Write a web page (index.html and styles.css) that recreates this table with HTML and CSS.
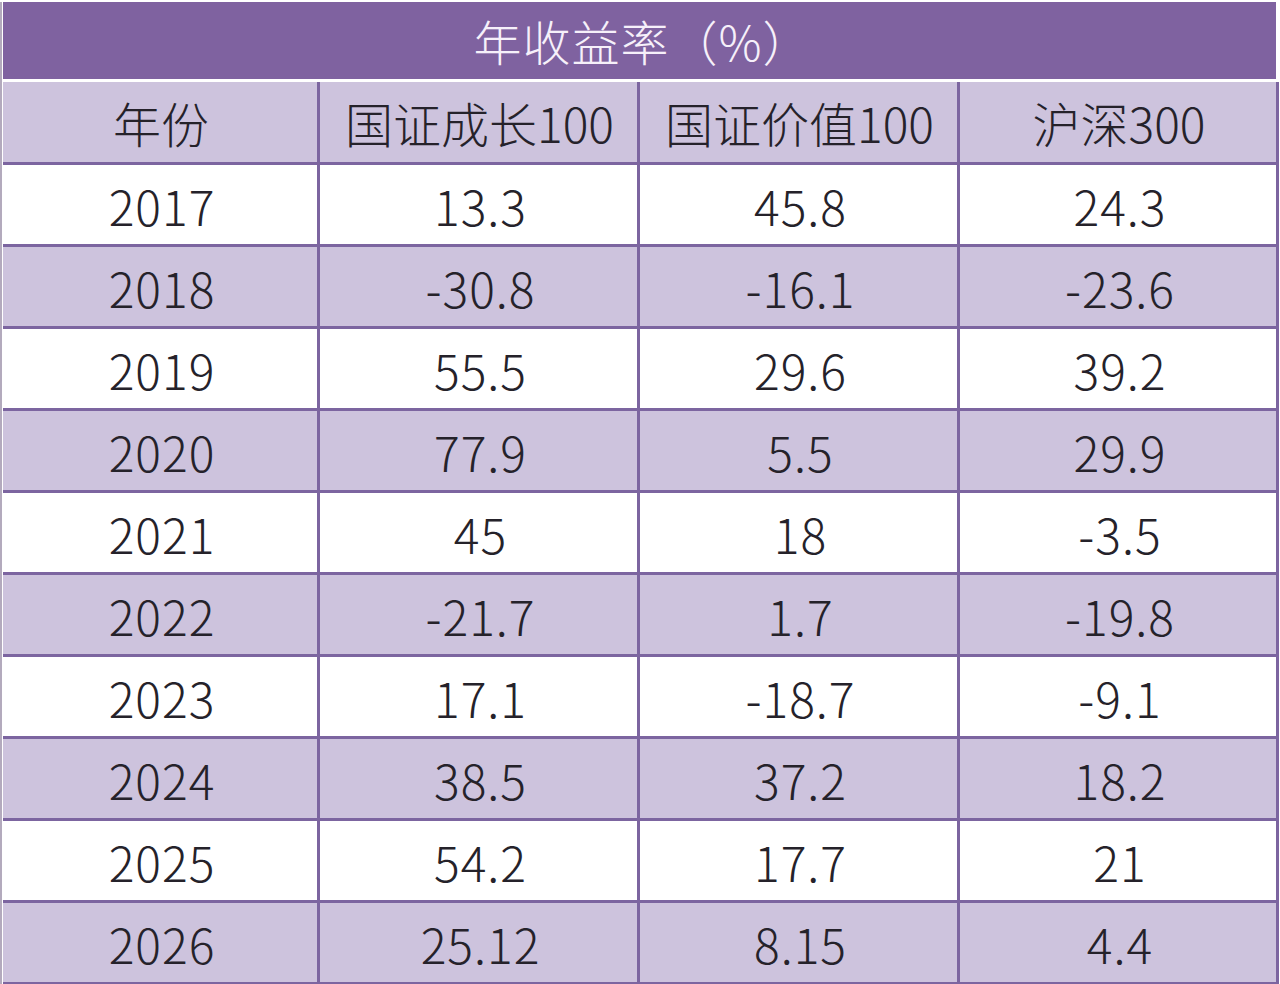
FILE: index.html
```html
<!DOCTYPE html>
<html lang="zh">
<head>
<meta charset="utf-8">
<link rel="stylesheet" href="styles.css">
</head>
<body>
<div class="page">
  <div class="title">年收益率（%）</div>
  <div class="table">
    <div class="cell head">年份</div><div class="cell head">国证成长100</div><div class="cell head">国证价值100</div><div class="cell head">沪深300</div>
    <div class="cell">2017</div><div class="cell">13.3</div><div class="cell">45.8</div><div class="cell">24.3</div>
    <div class="cell alt">2018</div><div class="cell alt">-30.8</div><div class="cell alt">-16.1</div><div class="cell alt">-23.6</div>
    <div class="cell">2019</div><div class="cell">55.5</div><div class="cell">29.6</div><div class="cell">39.2</div>
    <div class="cell alt">2020</div><div class="cell alt">77.9</div><div class="cell alt">5.5</div><div class="cell alt">29.9</div>
    <div class="cell">2021</div><div class="cell">45</div><div class="cell">18</div><div class="cell">-3.5</div>
    <div class="cell alt">2022</div><div class="cell alt">-21.7</div><div class="cell alt">1.7</div><div class="cell alt">-19.8</div>
    <div class="cell">2023</div><div class="cell">17.1</div><div class="cell">-18.7</div><div class="cell">-9.1</div>
    <div class="cell alt">2024</div><div class="cell alt">38.5</div><div class="cell alt">37.2</div><div class="cell alt">18.2</div>
    <div class="cell">2025</div><div class="cell">54.2</div><div class="cell">17.7</div><div class="cell">21</div>
    <div class="cell alt">2026</div><div class="cell alt">25.12</div><div class="cell alt">8.15</div><div class="cell alt">4.4</div>
  </div>
</div>
</body>
</html>
```

FILE: styles.css
```css
html, body {
  margin: 0;
  padding: 0;
  background: #ffffff;
}
body {
  width: 1280px;
  height: 984px;
  overflow: hidden;
  font-family: "Noto Sans CJK SC", "Noto Sans", sans-serif;
  font-weight: 200;
}
.page {
  border-left: 2px solid #b3aabd;
  padding-left: 1px;
  width: 1277px;
}
.title {
  margin-top: 2px;
  height: 77px;
  width: 1273px;
  background: #7f62a0;
  color: #f6f0fa;
  font-size: 48px;
  line-height: 77px;
  text-align: center;
  letter-spacing: 1px;
  padding-left: 6px;
  box-sizing: border-box;
}
.table {
  margin-top: 3px;
  display: grid;
  grid-template-columns: 314px 317px 317px 316px;
  grid-template-rows: 80px repeat(10, 79px);
  gap: 3px;
  padding: 0 3px 3px 0;
  background: #7c65a0;
  width: 1273px;
}
.cell {
  background: #ffffff;
  color: #25222a;
  font-size: 48px;
  letter-spacing: 1px;
  display: flex;
  align-items: center;
  justify-content: center;
  padding-left: 4px;
}
.head, .alt {
  background: #cdc3dd;
}
.head {
  font-size: 48px;
  letter-spacing: 0;
  padding-left: 2px;
}
```
